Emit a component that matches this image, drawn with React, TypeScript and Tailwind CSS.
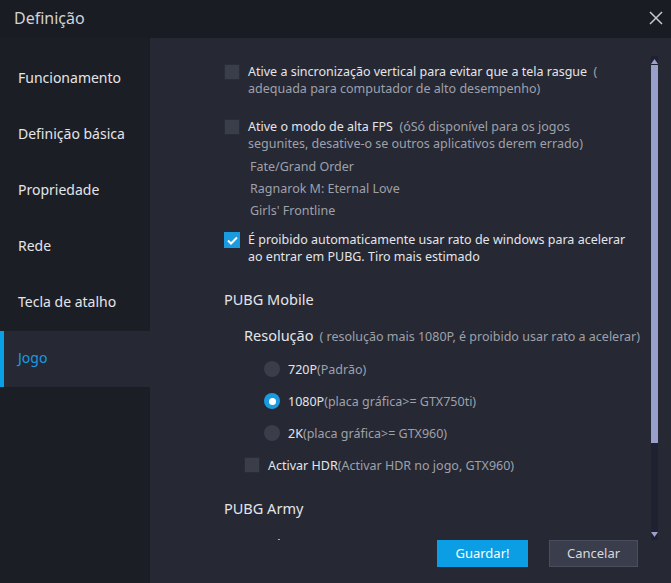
import React from "react";

const menu = ["Funcionamento", "Definição básica", "Propriedade", "Rede", "Tecla de atalho", "Jogo"];

function Box({ checked = false }: { checked?: boolean }) {
  return checked ? (
    <span className="w-[16px] h-[16px] shrink-0 bg-[#1a9be0] flex items-center justify-center">
      <svg width="11" height="9" viewBox="0 0 11 9" fill="none">
        <path d="M1 4.5L4 7.5L10 1.5" stroke="white" strokeWidth="2" />
      </svg>
    </span>
  ) : (
    <span className="w-[16px] h-[16px] shrink-0 bg-[#3a3d4a] border border-[#2a2c36]" />
  );
}

function Radio({ on = false }: { on?: boolean }) {
  return on ? (
    <span className="w-[16px] h-[16px] rounded-full bg-[#1a9be0] flex items-center justify-center shrink-0">
      <span className="w-[7px] h-[7px] rounded-full bg-white" />
    </span>
  ) : (
    <span className="w-[16px] h-[16px] rounded-full bg-[#3a3d4a] shrink-0" />
  );
}

export default function App() {
  return (
    <div
      className="w-[671px] h-[583px] bg-[#262834] flex flex-col overflow-hidden"
      style={{ fontFamily: '"Noto Sans", "Liberation Sans", sans-serif' }}
    >
      {/* Title bar */}
      <div className="h-[38px] bg-[#1a1c24] flex items-center justify-between pl-[14px] pr-[6px] pb-[2px] shrink-0">
        <span className="text-[16px] text-[#d2d3d6]">Definição</span>
        <svg width="16" height="16" viewBox="0 0 16 16" className="mr-[1px]">
          <path d="M2 2L14 14M14 2L2 14" stroke="#c8c9cc" strokeWidth="1.5" />
        </svg>
      </div>

      <div className="flex flex-1 min-h-0">
        {/* Sidebar */}
        <div className="w-[150px] bg-[#1c1e26] pt-[13px] shrink-0">
          {menu.map((m) => (
            <div
              key={m}
              className={`h-[56px] flex items-center pl-[18px] pb-[4px] text-[14px] relative ${
                m === "Jogo" ? "bg-[#262834] text-[#1a9be0]" : "text-[#e4e5e8]"
              }`}
            >
              {m === "Jogo" && <span className="absolute left-0 top-0 bottom-0 w-[4px] bg-[#0aa0e8]" />}
              {m}
            </div>
          ))}
        </div>

        {/* Main */}
        <div className="flex-1 flex flex-col min-w-0">
          <div className="h-[502px] flex shrink-0">
            <div className="flex-1 overflow-hidden pl-[74px] pt-[26px] text-[12.5px] leading-[17px] text-[#e4e5e8]">
              <div className="flex gap-[8px]">
                <Box />
                <div className="-mt-[1px] max-w-[382px]">
                  Ative a sincronização vertical para evitar que a tela rasgue{" "}
                  <span className="text-[#9ea1aa]">
                    &nbsp;( adequada para computador de alto desempenho)
                  </span>
                </div>
              </div>

              <div className="flex gap-[8px] mt-[22px]">
                <Box />
                <div className="-mt-[1px] max-w-[382px]">
                  Ative o modo de alta FPS{" "}
                  <span className="text-[#9ea1aa]">
                    &nbsp;(óSó disponível para os jogos segunites, desative-o se outros aplicativos derem errado)
                  </span>
                </div>
              </div>
              <div className="pl-[26px] text-[#9ea1aa] flex flex-col mt-[4px]">
                <span className="h-[22px] leading-[22px]">Fate/Grand Order</span>
                <span className="h-[22px] leading-[22px]">Ragnarok M: Eternal Love</span>
                <span className="h-[22px] leading-[22px]">Girls' Frontline</span>
              </div>

              <div className="flex gap-[8px] mt-[10px]">
                <Box checked />
                <div className="-mt-[1px] max-w-[382px]">
                  É proibido automaticamente usar rato de windows para acelerar ao entrar em PUBG. Tiro mais estimado
                </div>
              </div>

              <div className="mt-[24px] text-[14.5px] leading-[20px]">PUBG Mobile</div>

              <div className="mt-[16px] pl-[20px] flex items-baseline whitespace-nowrap">
                <span className="text-[14.5px] leading-[20px]">Resolução</span>
                <span className="text-[#9ea1aa] ml-[6px]">( resolução mais 1080P, é proibido usar rato a acelerar)</span>
              </div>

              <div className="pl-[40px] flex flex-col mt-[8px]">
                <div className="h-[32px] flex items-center gap-[8px]">
                  <Radio />
                  <span>
                    720P<span className="text-[#9ea1aa]">(Padrão)</span>
                  </span>
                </div>
                <div className="h-[32px] flex items-center gap-[8px]">
                  <Radio on />
                  <span>
                    1080P<span className="text-[#9ea1aa]">(placa gráfica&gt;= GTX750ti)</span>
                  </span>
                </div>
                <div className="h-[32px] flex items-center gap-[8px]">
                  <Radio />
                  <span>
                    2K<span className="text-[#9ea1aa]">(placa gráfica&gt;= GTX960)</span>
                  </span>
                </div>
              </div>

              <div className="pl-[20px] h-[32px] flex items-center gap-[8px]">
                <Box />
                <span>
                  Activar HDR<span className="text-[#9ea1aa]">(Activar HDR no jogo, GTX960)</span>
                </span>
              </div>

              <div className="mt-[17px] text-[14.5px] leading-[20px]">PUBG Army</div>
              <div className="mt-[16px] pl-[20px] text-[14.5px] leading-[20px]">Resolução</div>
            </div>

            {/* Scrollbar */}
            <div className="w-[7px] mr-[13px] ml-[6px] mt-[18px] bg-[#1f2130] flex flex-col items-center">
              <svg width="7" height="5" viewBox="0 0 7 5" className="mt-[3px]">
                <path d="M0 5L3.5 0L7 5Z" fill="#9aa0cc" />
              </svg>
              <div className="w-[7px] h-[378px] bg-[#9aa0cc] mt-[1px]" />
              <div className="flex-1" />
              <svg width="7" height="5" viewBox="0 0 7 5" className="mb-[3px]">
                <path d="M0 0L3.5 5L7 0Z" fill="#9aa0cc" />
              </svg>
            </div>
          </div>

          {/* Footer */}
          <div className="flex justify-end gap-[21px] pr-[33px]">
            <button className="w-[91px] h-[27px] bg-[#0c9ee4] text-white text-[13px]">Guardar!</button>
            <button className="w-[89px] h-[27px] bg-[#3a3d4c] border border-[#4a4d5e] text-[#d8d9dc] text-[13px]">
              Cancelar
            </button>
          </div>
        </div>
      </div>
    </div>
  );
}
